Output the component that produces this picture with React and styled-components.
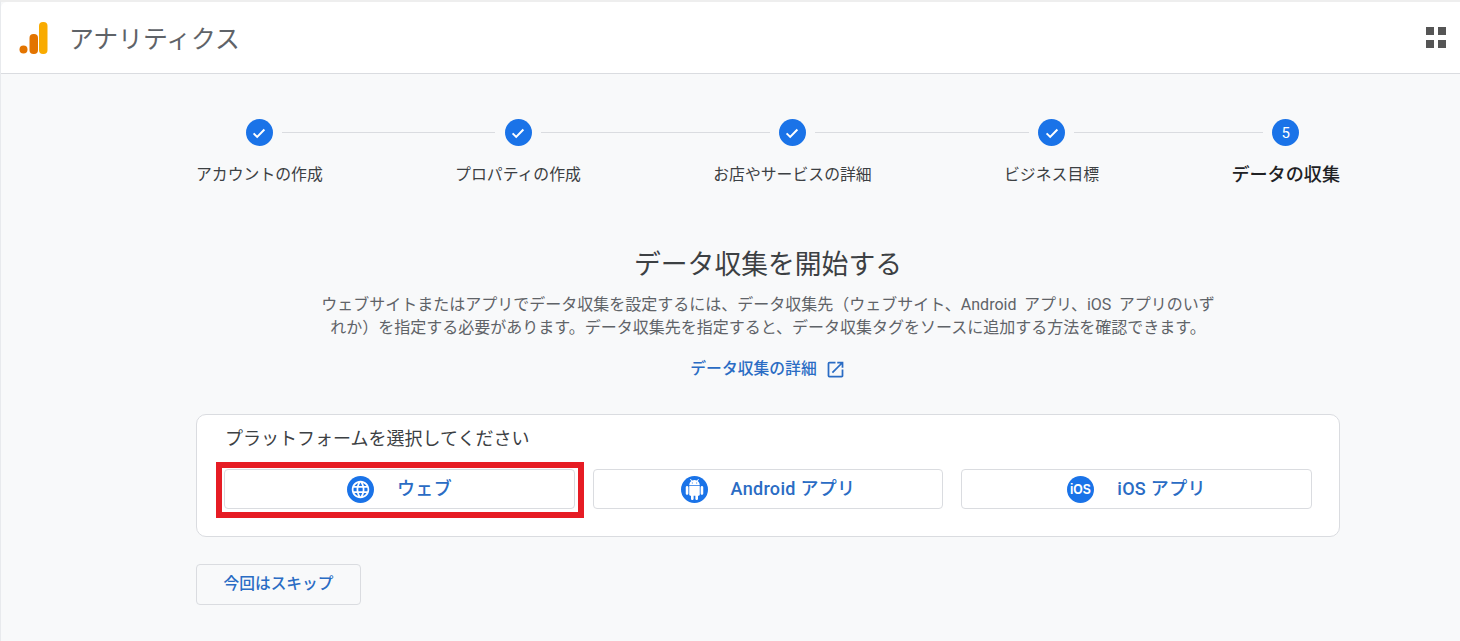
import React from "react";
import styled, { createGlobalStyle } from "styled-components";
import { MdLanguage, MdOpenInNew } from "react-icons/md";

const Global = createGlobalStyle`
  html, body { margin: 0; padding: 0; background: #f8f9fa; }
  body { font-family: Roboto, "Noto Sans CJK JP", sans-serif; color: #3c4043; }
  * { box-sizing: border-box; }
`;

const Page = styled.div`
  min-height: 641px;
  background: #f8f9fa;
  border-top: 2px solid #eeeeee;
  border-left: 1px solid #e8eaed;
`;

const Header = styled.header`
  height: 72px;
  background: #fff;
  border-bottom: 1px solid #dadce0;
  border-top-left-radius: 6px;
  display: flex;
  align-items: center;
  padding: 0 14px 0 17px;
`;

const Logo = styled.svg`
  width: 30px;
  height: 34px;
  flex: none;
`;

const Product = styled.div`
  margin-left: 21px;
  padding-top: 5px;
  font-size: 24.8px;
  color: #5f6368;
  line-height: 32px;
  flex: 1;
`;

const Main = styled.main`
  width: 1144px;
  margin-left: 195px;
  padding-top: 45px;
`;

const Stepper = styled.ol`
  list-style: none;
  margin: 0;
  padding: 0;
  display: flex;
  align-items: flex-start;
`;

const Step = styled.li`
  display: flex;
  flex-direction: column;
  align-items: center;
  flex: none;
`;

const Dot = styled.span`
  width: 27px;
  height: 27px;
  border-radius: 50%;
  background: #1a73e8;
  color: #fff;
  display: flex;
  align-items: center;
  justify-content: center;
  font-size: 15px;
  font-weight: 400;
  svg { width: 18px; height: 18px; }
`;

const StepLabel = styled.span`
  margin-top: 17px;
  font-size: ${(p) => (p.$active ? "18.1px" : "15.85px")};
  font-weight: ${(p) => (p.$active ? 500 : 400)};
  line-height: 24px;
  color: ${(p) => (p.$active ? "#202124" : "#3c4043")};
  white-space: nowrap;
`;

const Connector = styled.li`
  flex: 1 0 ${(p) => -(p.$left + p.$right)}px;
  height: 1px;
  margin-top: 13px;
  background: #dadce0;
  margin-left: ${(p) => p.$left}px;
  margin-right: ${(p) => p.$right}px;
`;

const Intro = styled.section`
  margin-top: 60px;
  display: flex;
  flex-direction: column;
  align-items: center;
`;

const Title = styled.h1`
  margin: 0;
  font-size: 26.8px;
  font-weight: 400;
  line-height: 36px;
  color: #3c4043;
`;

const Description = styled.p`
  margin: 10px 0 0;
  width: 900px;
  font-size: 16px;
  line-height: 23px;
  word-spacing: 3.5px;
  color: #5f6368;
  text-align: center;
`;

const DocLink = styled.a`
  margin-top: 18px;
  display: flex;
  align-items: center;
  gap: 8px;
  font-size: 15.8px;
  font-weight: 500;
  line-height: 24px;
  color: #2a6cc4;
  text-decoration: none;
  svg { width: 21px; height: 21px; }
`;

const Card = styled.section`
  margin-top: 33px;
  height: 123px;
  background: #fff;
  border: 1px solid #dadce0;
  border-radius: 10px;
  padding: 12px 27px 0 27px;
`;

const CardTitle = styled.div`
  font-size: 18px;
  line-height: 24px;
  color: #3c4043;
  margin-left: 1px;
`;

const Platforms = styled.div`
  margin-top: 18px;
  display: grid;
  grid-template-columns: 351px 350px 351px;
  gap: 18px;
`;

const Platform = styled.button`
  position: relative;
  height: 40px;
  background: #fff;
  border: 1px solid #dadce0;
  border-radius: 4px;
  display: flex;
  align-items: center;
  justify-content: center;
  gap: 23px;
  font: 500 18px Roboto, "Noto Sans CJK JP", sans-serif;
  letter-spacing: 0.3px;
  color: #2a6cc4;
  padding: 0;
`;

const PlatformName = styled.span`
  padding-bottom: 5px;
`;

const Highlight = styled.span`
  position: absolute;
  inset: -8px -10px -10px -9px;
  border: 6px solid #e61c24;
  pointer-events: none;
`;

const Badge = styled.span`
  width: 27px;
  height: 27px;
  border-radius: 50%;
  background: #1a73e8;
  color: #fff;
  display: flex;
  align-items: center;
  justify-content: center;
  flex: none;
  svg { width: 21px; height: 21px; }
`;

const IosText = styled.span`
  font-family: "Liberation Sans", sans-serif;
  font-size: 15.5px;
  font-weight: 700;
  letter-spacing: 0;
  transform: scaleX(0.78);
`;

const SkipButton = styled.button`
  margin-top: 27px;
  display: block;
  width: 165px;
  height: 41px;
  background: transparent;
  border: 1px solid #dadce0;
  border-radius: 4px;
  font: 500 15.7px Roboto, "Noto Sans CJK JP", sans-serif;
  color: #2a6cc4;
  padding: 0 0 5px;
`;

const AndroidIcon = () => (
  <svg viewBox="0 0 24 24" fill="currentColor">
    <path d="M6 18c0 .55.45 1 1 1h1v3.5c0 .83.67 1.5 1.5 1.5s1.5-.67 1.5-1.5V19h2v3.5c0 .83.67 1.5 1.5 1.5s1.5-.67 1.5-1.5V19h1c.55 0 1-.45 1-1V8H6v10zM3.5 8C2.67 8 2 8.67 2 9.5v7c0 .83.67 1.5 1.5 1.5S5 17.33 5 16.5v-7C5 8.67 4.33 8 3.5 8zm17 0c-.83 0-1.5.67-1.5 1.5v7c0 .83.67 1.5 1.5 1.5s1.5-.67 1.5-1.5v-7c0-.83-.67-1.5-1.5-1.5zm-4.97-5.84l1.3-1.3c.2-.2.2-.51 0-.71-.2-.2-.51-.2-.71 0l-1.48 1.48C13.85 1.23 12.95 1 12 1c-.96 0-1.86.23-2.66.63L7.85.15c-.2-.2-.51-.2-.71 0-.2.2-.2.51 0 .71l1.31 1.31C6.97 3.26 6 5.01 6 7h12c0-1.99-.97-3.75-2.47-4.84zM10 5H9V4h1v1zm5 0h-1V4h1v1z" />
  </svg>
);

const CheckIcon = () => (
  <svg viewBox="0 0 18 18" fill="none" stroke="currentColor" strokeWidth="2">
    <path d="M3.6 9.4l3.6 3.5 7.2-7.4" />
  </svg>
);

const steps = [
  { label: "アカウントの作成", w: 127 },
  { label: "プロパティの作成", w: 125 },
  { label: "お店やサービスの詳細", w: 158 },
  { label: "ビジネス目標", w: 95 },
  { label: "データの収集", w: 108, active: true },
];

const platforms = [
  { name: "ウェブ", icon: <MdLanguage />, marked: true },
  { name: "Android アプリ", icon: <AndroidIcon /> },
  { name: "iOS アプリ", icon: <IosText>iOS</IosText> },
];

const offset = (w) => -(w / 2 - 13.5 - 9);

export default function App() {
  return (
    <Page>
      <Global />
      <Header>
        <Logo viewBox="0 0 30 34">
          <circle cx="5.5" cy="28.5" r="4" fill="#e37400" />
          <rect x="11.5" y="13" width="8.5" height="20" rx="4" fill="#e37400" />
          <rect x="21" y="1" width="8.5" height="32" rx="4" fill="#f9ab00" />
        </Logo>
        <Product>アナリティクス</Product>
        <svg width="20" height="21" viewBox="0 0 20 21" fill="#555" style={{ flex: "none" }}>
          <rect x="0" y="0" width="8" height="8" />
          <rect x="12" y="0" width="8" height="8" />
          <rect x="0" y="13" width="8" height="8" />
          <rect x="12" y="13" width="8" height="8" />
        </svg>
      </Header>
      <Main>
        <Stepper>
          {steps.map((s, i) => (
            <React.Fragment key={s.label}>
              <Step>
                <Dot>{s.active ? "5" : <CheckIcon />}</Dot>
                <StepLabel $active={s.active}>{s.label}</StepLabel>
              </Step>
              {i < steps.length - 1 && (
                <Connector $left={offset(s.w)} $right={offset(steps[i + 1].w)} />
              )}
            </React.Fragment>
          ))}
        </Stepper>
        <Intro>
          <Title>データ収集を開始する</Title>
          <Description>
            ウェブサイトまたはアプリでデータ収集を設定するには、データ収集先（ウェブサイト、Android アプリ、iOS アプリのいずれか）を指定する必要があります。データ収集先を指定すると、データ収集タグをソースに追加する方法を確認できます。
          </Description>
          <DocLink href="#">
            データ収集の詳細
            <MdOpenInNew />
          </DocLink>
        </Intro>
        <Card>
          <CardTitle>プラットフォームを選択してください</CardTitle>
          <Platforms>
            {platforms.map((p) => (
              <Platform key={p.name}>
                <Badge>{p.icon}</Badge>
                <PlatformName>{p.name}</PlatformName>
                {p.marked && <Highlight />}
              </Platform>
            ))}
          </Platforms>
        </Card>
        <SkipButton>今回はスキップ</SkipButton>
      </Main>
    </Page>
  );
}
